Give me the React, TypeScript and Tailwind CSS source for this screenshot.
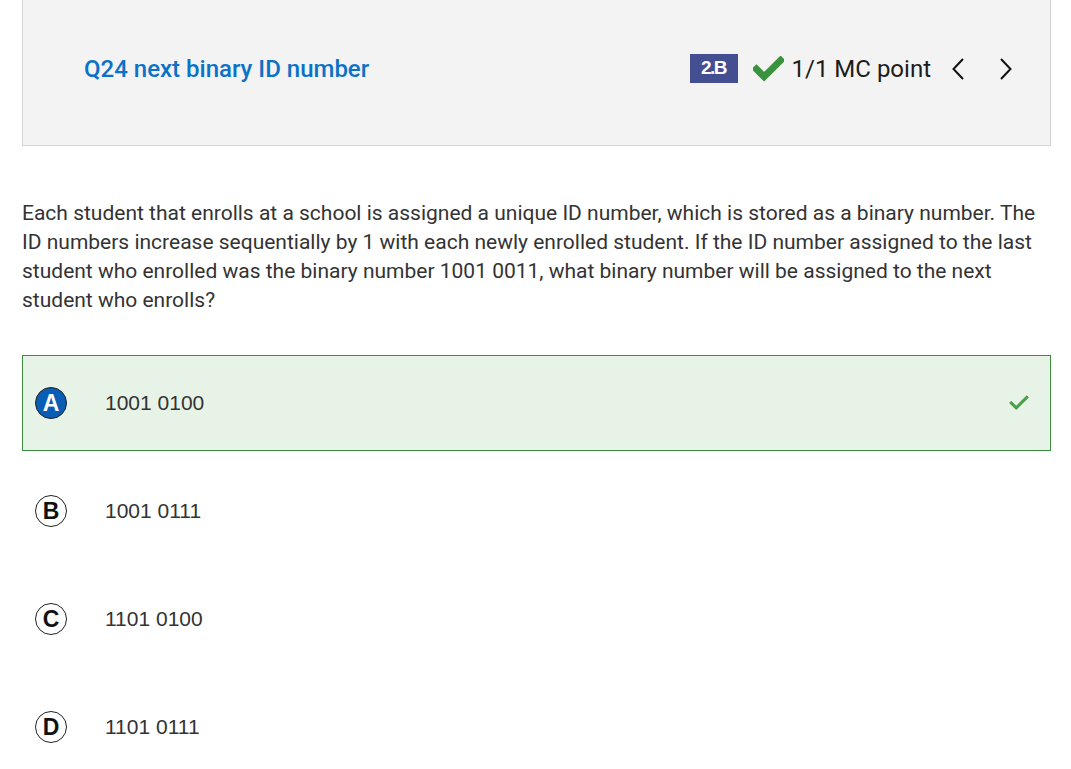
import React from 'react';

const options = [
    { letter: 'A', text: '1001 0100', correct: true },
    { letter: 'B', text: '1001 0111', correct: false },
    { letter: 'C', text: '1101 0100', correct: false },
    { letter: 'D', text: '1101 0111', correct: false },
];

const CheckMark: React.FC<{ className?: string; width?: number }> = ({ className, width = 6 }) => (
    <svg viewBox="0 0 32 26" className={className}>
        <path d="M3.5 13 L11.5 21 L28.5 4" fill="none" stroke="currentColor" strokeWidth={width} strokeLinecap="square" strokeLinejoin="miter" />
    </svg>
);

export default function App() {
    return (
        <div className="min-h-screen bg-white text-[#333] font-['Roboto',sans-serif]">
            {/* Header */}
            <div className="mx-[22px] w-[1029px] h-[146px] bg-[#f3f3f3] border border-t-0 border-[#d2d2d2] flex items-center justify-between pl-[61px] pr-[38px]">
                <h1 className="text-[24px] font-medium text-[#0b72c7] mt-[-8px]">Q24 next binary ID number</h1>
                <div className="flex items-center mt-[-8px]">
                    <span className="w-[48px] h-[29px] bg-[#434f91] text-white text-[19px] font-bold flex items-center justify-center font-['Liberation_Sans',sans-serif] tracking-[-1.5px]">2.B</span>
                    <CheckMark className="w-[31px] h-[26px] ml-[15px] text-[#3a923e]" width={7} />
                    <span className="ml-[8px] text-[24px] text-[#1c1c1c]">1/1 MC point</span>
                    <svg viewBox="0 0 12 22" className="w-[12px] h-[22px] ml-[21px]">
                        <path d="M11 1 L1.5 11 L11 21" fill="none" stroke="#111" strokeWidth="2" />
                    </svg>
                    <svg viewBox="0 0 12 22" className="w-[12px] h-[22px] ml-[36px]">
                        <path d="M1 1 L10.5 11 L1 21" fill="none" stroke="#111" strokeWidth="2" />
                    </svg>
                </div>
            </div>

            {/* Question */}
            <p className="mx-[22px] mt-[53px] text-[21px] leading-[29px] text-[#333] pr-[10px]">
                Each student that enrolls at a school is assigned a unique ID number, which is stored as a binary number. The ID numbers increase sequentially by 1 with each newly enrolled student. If the ID number assigned to the last student who enrolled was the binary number 1001 0011, what binary number will be assigned to the next student who enrolls?
            </p>

            {/* Options */}
            <div className="mx-[22px] w-[1029px] mt-[40px] flex flex-col gap-[12px]">
                {options.map((o) => (
                    <div
                        key={o.letter}
                        className={`h-[96px] flex items-center pl-[12px] pr-[20px] border ${o.correct ? 'bg-[#e8f3e8] border-[#3b8c3b]' : 'bg-white border-transparent'}`}
                    >
                        {o.correct ? (
                            <span className="w-[32px] h-[32px] rounded-full bg-[#0a5db5] border border-[#222] text-white font-bold text-[23px] flex items-center justify-center font-['Liberation_Sans',sans-serif]">{o.letter}</span>
                        ) : (
                            <span className="w-[32px] h-[32px] rounded-full bg-white border border-[#222] text-[#111] font-bold text-[23px] flex items-center justify-center font-['Liberation_Sans',sans-serif]">{o.letter}</span>
                        )}
                        <span className="ml-[38px] text-[21px] text-[#333] font-['Liberation_Sans',sans-serif]">{o.text}</span>
                        {o.correct && <CheckMark className="ml-auto w-[20px] h-[16px] mr-[1px] text-[#4aa04a]" width={5} />}
                    </div>
                ))}
            </div>
        </div>
    );
}
